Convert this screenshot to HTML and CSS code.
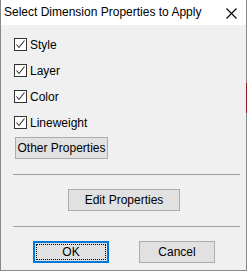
FILE: index.html
```html
<!DOCTYPE html>
<html lang="en">
<head>
    <meta charset="UTF-8">
    <title>Select Dimension Properties to Apply</title>
    <link rel="stylesheet" href="styles.css">
</head>
<body>
    <div class="dialog">
        <div class="title-bar">
            <span class="title">Select Dimension Properties to Apply</span>
            <svg class="close" width="11" height="11" viewBox="0 0 11 11">
                <path d="M0.5 0.5 L10.5 10.5 M10.5 0.5 L0.5 10.5" stroke="#000" stroke-width="1.1" fill="none"/>
            </svg>
        </div>
        <div class="content">
            <div class="checks">
                <label class="check-row"><span class="box"><svg width="11" height="11" viewBox="0 0 11 11"><path d="M1.5 5.5 L4 8.5 L9.5 1.5" stroke="#333" stroke-width="1.1" fill="none"/></svg></span>Style</label>
                <label class="check-row"><span class="box"><svg width="11" height="11" viewBox="0 0 11 11"><path d="M1.5 5.5 L4 8.5 L9.5 1.5" stroke="#333" stroke-width="1.1" fill="none"/></svg></span>Layer</label>
                <label class="check-row"><span class="box"><svg width="11" height="11" viewBox="0 0 11 11"><path d="M1.5 5.5 L4 8.5 L9.5 1.5" stroke="#333" stroke-width="1.1" fill="none"/></svg></span>Color</label>
                <label class="check-row"><span class="box"><svg width="11" height="11" viewBox="0 0 11 11"><path d="M1.5 5.5 L4 8.5 L9.5 1.5" stroke="#333" stroke-width="1.1" fill="none"/></svg></span>Lineweight</label>
            </div>
            <button class="btn other-btn">Other Properties</button>
            <div class="separator"></div>
            <div class="center-row">
                <button class="btn edit-btn">Edit Properties</button>
            </div>
            <div class="separator second"></div>
            <div class="footer">
                <button class="btn ok-btn"><span class="focus">OK</span></button>
                <button class="btn cancel-btn">Cancel</button>
            </div>
        </div>
        <div class="edge-mark"></div>
    </div>
</body>
</html>
```

FILE: styles.css
```css
body {
    margin: 0;
    padding: 0;
    font-family: 'Liberation Sans', Arial, sans-serif;
    font-size: 12px;
    color: #000;
    background: #f0f0f0;
}
.dialog {
    position: relative;
    width: 247px;
    height: 271px;
    box-sizing: border-box;
    border: 1px solid #888;
    border-top: none;
    background: #f0f0f0;
    display: flex;
    flex-direction: column;
}
.title-bar {
    height: 25px;
    background: #fff;
    display: flex;
    align-items: center;
    justify-content: space-between;
    padding: 0 9px 0 3px;
}
.title {
    font-size: 12px;
    letter-spacing: 0;
    padding-bottom: 1px;
}
.close {
    display: block;
    margin-top: 1px;
}
.content {
    display: flex;
    flex-direction: column;
    padding: 13px 0 0 0;
}
.checks {
    display: flex;
    flex-direction: column;
    gap: 13px;
    padding-left: 13px;
}
.check-row {
    display: flex;
    align-items: center;
    height: 13px;
    gap: 3px;
}
.box {
    width: 11px;
    height: 11px;
    border: 1px solid #333;
    background: #fff;
    display: flex;
}
.btn {
    font-family: inherit;
    font-size: 12px;
    color: #000;
    background: #e1e1e1;
    border: 1px solid #adadad;
    padding: 0;
    height: 22px;
    box-sizing: border-box;
    margin: 0;
}
.other-btn {
    width: 93px;
    margin: 8px 0 0 14px;
}
.separator {
    height: 1px;
    background: #a0a0a0;
    margin: 15px 6px 0 12px;
}
.separator.second {
    margin-top: 15px;
}
.center-row {
    display: flex;
    justify-content: center;
    margin-top: 14px;
}
.edit-btn {
    width: 112px;
    margin-left: 1px;
}
.footer {
    display: flex;
    justify-content: space-between;
    margin: 14px 31px 0 32px;
}
.ok-btn,
.cancel-btn {
    width: 76px;
}
.ok-btn {
    border: 2px solid #0078d7;
    padding: 1px;
}
.ok-btn .focus {
    display: flex;
    align-items: center;
    justify-content: center;
    height: 100%;
    box-sizing: border-box;
    border: 1px dotted #000;
}
.edge-mark {
    position: absolute;
    right: -1px;
    top: 83px;
    width: 1px;
    height: 30px;
    background: #8b1a1a;
}
```
